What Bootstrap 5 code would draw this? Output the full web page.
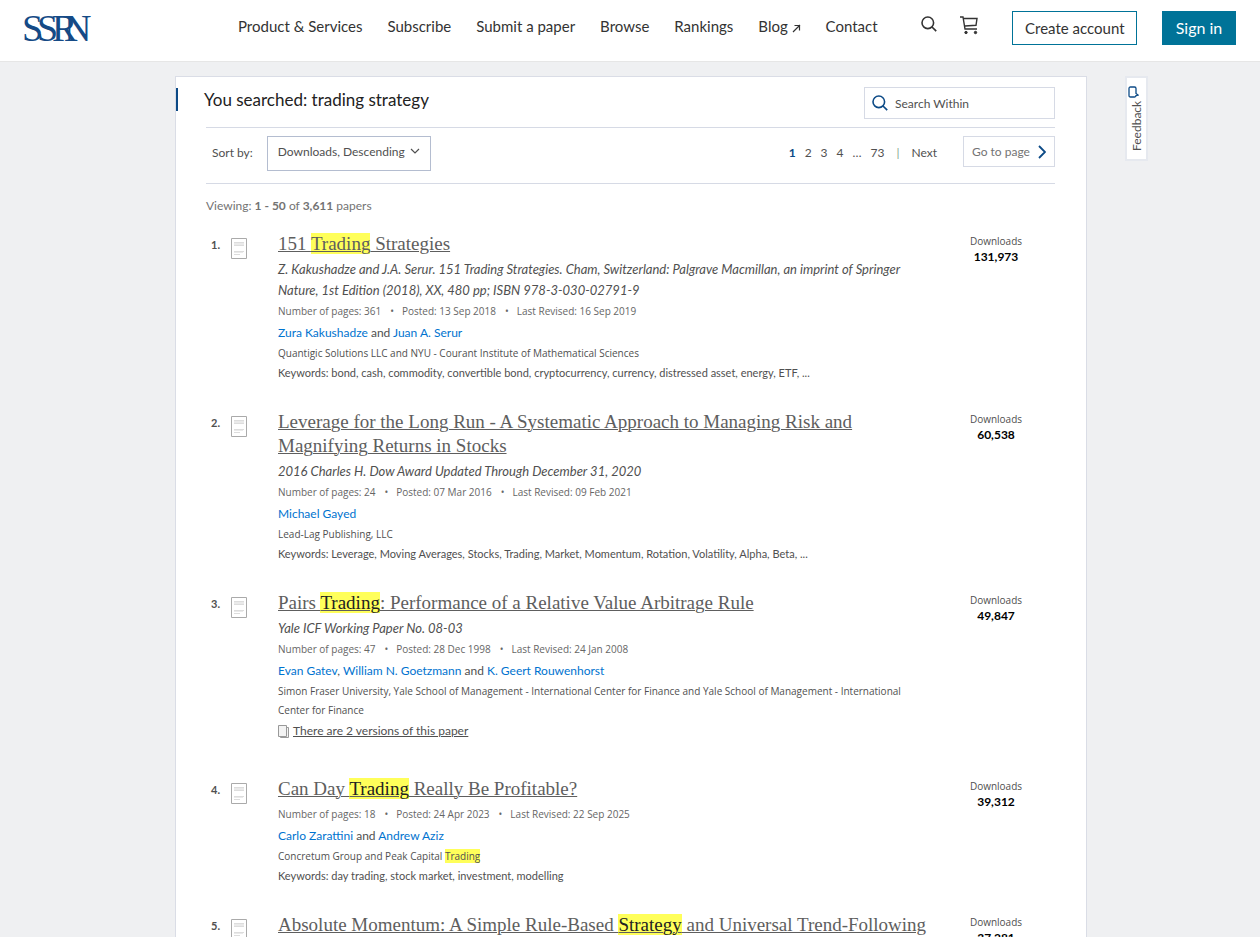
<!DOCTYPE html>
<html lang="en">
<head>
<meta charset="utf-8">
<meta name="viewport" content="width=device-width, initial-scale=1">
<title>SSRN: trading strategy</title>
<link rel="stylesheet" href="https://cdn.jsdelivr.net/npm/bootstrap@5.3.0/dist/css/bootstrap.min.css">
<style>
body{background:#eff0f2;font-family:Lato,"Liberation Sans",sans-serif;font-size:12px;line-height:21px;color:#505050}
a{color:#0073cf;text-decoration:none}
.site-header{background:#fff;border-bottom:1px solid #e6e6e6;height:62px;color:#333}
.brand{margin-left:22px}
.site-header .nav-link{color:#333;padding:0;font-size:15px;line-height:24px;white-space:nowrap}
.main-nav{gap:25px;margin-left:144px;padding-top:14px}
.header-actions{padding:11px 24px 0 0}
.header-actions .icon-button{padding:0;border:0;background:none;color:#333;display:flex;margin-top:4px}
.header-actions .btn{height:34px;line-height:24px;padding:4px 12px;border-radius:0;white-space:nowrap}
.cart-button{margin:0 34px 0 23px}
.header-actions .btn-create{border:1px solid #007398;color:#333;background:#fff;width:125px;font-size:15px;margin-right:25px}
.header-actions .btn-signin{border:1px solid #007398;background:#007398;color:#fff;width:74px;font-size:16px}
.page-main{padding:14px 0 0 2px}
.side{flex:1 1 0}
.results-panel{flex:0 1 912px;background:#fff;border:1px solid #dadde6}
.panel-heading{border-left:2px solid #0c4a86;height:23px;margin-top:11px;padding-left:26px;font-size:17px;line-height:23px;color:#222}
.search-within{width:191px;height:32px;margin:10px 31px 0 0;border:1px solid #d6dae5;padding:0 7px;gap:7px}
.search-within input{border:0;outline:0;font-size:12px;width:150px;padding:0;color:#505050}
.search-within input::placeholder{color:#505050;opacity:1}
.panel-body{padding:0 31px 0 30px}
.toolbar-row{border-top:1px solid #d6dae5;border-bottom:1px solid #d6dae5;margin-top:8px;padding:8px 0 12px 6px;height:57px}
.toolbar-row label,.page-list{padding-top:6px}
.sort-select{appearance:none;width:164px;height:35px;border:1px solid #b4bdd0;border-radius:0;padding:0 20px 4px 10px;margin-left:14px;color:#505050;font-size:12px;
background:#fff url("data:image/svg+xml,%3Csvg xmlns='http://www.w3.org/2000/svg' width='10' height='6'%3E%3Cpath d='M1 1l4 4 4-4' fill='none' stroke='%23505050' stroke-width='1.2'/%3E%3C/svg%3E") no-repeat right 10px top 11px}
.page-list{gap:9px}
.page-list a{color:#505050}
.page-list .current{color:#0c4a86;font-weight:700}
.page-list .divider{color:#7fa38b;margin:0 3px}
.goto-page{width:92px;height:31px;border:1px solid #d6dae5;background:#fff;color:#737373;padding:0 8px;margin-left:26px}
.viewing{color:#737373;padding:11px 0 16px}
.paper{display:grid;grid-template-columns:20px 52px minmax(0,1fr) 118px;margin-bottom:28px}
.paper-no{font-size:11px;font-weight:700;padding:2px 0 0 5px}
.paper-icon{padding:6px 0 0 5px}
.paper-info{padding-right:8px}
.paper-title{font:400 19px/24px "Liberation Serif",serif;margin:0 0 3px}
.paper-title a{color:#5e5e5e;text-decoration:underline;text-decoration-thickness:1px}
.paper mark{background:#ffff5a;color:inherit;padding:0}
.paper-title .strong-hit mark{color:#222}
.paper-ref{font-size:13px;font-style:italic}
.paper-meta,.paper-affil,.dl{font-family:"Open Sans",sans-serif;font-size:10px}
.paper-meta{color:#666}
.paper-meta span+span::before{content:"•";margin:0 8px 0 9px}
.paper-authors{margin-bottom:1px}
.paper-affil{line-height:19px}
.paper-words{font-size:11px;line-height:19px}
.versions{margin-bottom:36px;gap:4px}
.versions a{color:#505050;text-decoration:underline}
.versions svg{margin-top:2px}
.dl{text-align:center;line-height:15px;padding-top:2px}
.dl strong{display:block;font-family:Lato,sans-serif;font-size:12px;color:#000}
.feedback-tab{writing-mode:vertical-rl;transform:rotate(180deg);background:#fff;border:2px solid #e6e9ef;width:23px;height:85px;margin:0 0 0 38px;padding:0;color:#505050;line-height:19px}
</style>
</head>
<body>
<svg class="d-none" aria-hidden="true">
<symbol id="doc" viewBox="0 0 16 21"><path fill="#fff" stroke="#aaa" d="M.5.5h15v20H.5z"/><path stroke="#ddd" d="M3 4.500h10M3 7.500h10M3 13.500h10M3 16.500h6"/><path stroke="#eaeaea" d="M3 5.500h10M3 6.500h10M3 14.500h9"/></symbol>
<symbol id="lens" viewBox="0 0 16 16"><circle cx="6.800" cy="6.800" r="5.800" fill="none" stroke="currentColor" stroke-width="1.600"/><path d="M11 11l4.200 4.200" stroke="currentColor" stroke-width="1.700"/></symbol>
</svg>
<header class="site-header d-flex align-items-start">
<a href="#" class="brand" aria-label="SSRN home"><svg class="d-block" width="72" height="60" viewBox="0 0 72 60"><text x="0 15 30 42" y="41" font-family="Liberation Serif,serif" font-size="38" fill="#154a86">SSRN</text></svg></a>
<nav class="nav main-nav flex-nowrap">
<a class="nav-link" href="#">Product &amp; Services</a><a class="nav-link" href="#">Subscribe</a><a class="nav-link" href="#">Submit a paper</a><a class="nav-link" href="#">Browse</a><a class="nav-link" href="#">Rankings</a><a class="nav-link" href="#">Blog <svg width="9" height="9" viewBox="0 0 9 9" fill="none" stroke="currentColor" stroke-width="1.200"><path d="M1 8l7-7M2.500 1.500h5v5"/></svg></a><a class="nav-link" href="#">Contact</a>
</nav>
<div class="header-actions d-flex align-items-start ms-auto">
<button class="icon-button" aria-label="Search"><svg width="16" height="18"><use href="#lens" width="16" height="16" y="1"/></svg></button>
<button class="icon-button cart-button" aria-label="Cart"><svg width="18" height="20" viewBox="0 0 18 20" fill="none" stroke="#333" stroke-width="1.400"><path d="M0 2h3l2 12h12M3.500 3.500H17l-1 6.800L4.800 11"/><circle cx="6" cy="17.500" r="1.200" fill="#333" stroke-width="1"/><circle cx="15.500" cy="17.500" r="1.200" fill="#333" stroke-width="1"/></svg></button>
<button class="btn btn-create">Create account</button>
<button class="btn btn-signin">Sign in</button>
</div>
</header>
<main class="page-main d-flex">
<div class="side"></div>
<section class="results-panel">
<div class="d-flex justify-content-between align-items-start">
<h1 class="panel-heading mb-0 fw-normal">You searched: trading strategy</h1>
<label class="search-within d-flex align-items-center"><svg width="16" height="16" color="#0c4a86"><use href="#lens"/></svg><input type="text" placeholder="Search Within" aria-label="Search Within"></label>
</div>
<div class="panel-body">
<div class="toolbar-row d-flex align-items-start">
<label for="sort">Sort by:</label>
<select id="sort" class="sort-select"><option>Downloads, Descending</option></select>
<nav class="page-list d-flex ms-auto" aria-label="Pages"><a class="current" href="#">1</a><a href="#">2</a><a href="#">3</a><a href="#">4</a><span>…</span><a href="#">73</a><span class="divider">|</span><a href="#">Next</a></nav>
<button class="goto-page d-flex align-items-center justify-content-between">Go to page<svg width="8" height="14" viewBox="0 0 8 14" fill="none" stroke="#0c4a86" stroke-width="1.800"><path d="M1 1l6 6-6 6"/></svg></button>
</div>
<div class="viewing">Viewing: <b>1 - 50</b> of <b>3,611</b> papers</div>

<article class="paper"><div class="paper-no">1.</div><div class="paper-icon"><svg class="d-block" width="16" height="21"><use href="#doc"/></svg></div>
<div class="paper-info"><h2 class="paper-title"><a href="#">151 <mark>Trading</mark> Strategies</a></h2>
<div class="paper-ref">Z. Kakushadze and J.A. Serur. 151 Trading Strategies. Cham, Switzerland: Palgrave Macmillan, an imprint of Springer Nature, 1st Edition (2018), XX, 480 pp; ISBN 978-3-030-02791-9</div>
<div class="paper-meta"><span>Number of pages: 361</span><span>Posted: 13 Sep 2018</span><span>Last Revised: 16 Sep 2019</span></div>
<div class="paper-authors"><a href="#">Zura Kakushadze</a> and <a href="#">Juan A. Serur</a></div>
<div class="paper-affil">Quantigic Solutions LLC and NYU - Courant Institute of Mathematical Sciences</div>
<div class="paper-words">Keywords: bond, cash, commodity, convertible bond, cryptocurrency, currency, distressed asset, energy, ETF, ...</div></div>
<div class="dl">Downloads<strong>131,973</strong></div></article>

<article class="paper"><div class="paper-no">2.</div><div class="paper-icon"><svg class="d-block" width="16" height="21"><use href="#doc"/></svg></div>
<div class="paper-info"><h2 class="paper-title"><a href="#">Leverage for the Long Run - A Systematic Approach to Managing Risk and Magnifying Returns in Stocks</a></h2>
<div class="paper-ref">2016 Charles H. Dow Award Updated Through December 31, 2020</div>
<div class="paper-meta"><span>Number of pages: 24</span><span>Posted: 07 Mar 2016</span><span>Last Revised: 09 Feb 2021</span></div>
<div class="paper-authors"><a href="#">Michael Gayed</a></div>
<div class="paper-affil">Lead-Lag Publishing, LLC</div>
<div class="paper-words">Keywords: Leverage, Moving Averages, Stocks, Trading, Market, Momentum, Rotation, Volatility, Alpha, Beta, ...</div></div>
<div class="dl">Downloads<strong>60,538</strong></div></article>

<article class="paper"><div class="paper-no">3.</div><div class="paper-icon"><svg class="d-block" width="16" height="21"><use href="#doc"/></svg></div>
<div class="paper-info"><h2 class="paper-title"><a class="strong-hit" href="#">Pairs <mark>Trading</mark>: Performance of a Relative Value Arbitrage Rule</a></h2>
<div class="paper-ref">Yale ICF Working Paper No. 08-03</div>
<div class="paper-meta"><span>Number of pages: 47</span><span>Posted: 28 Dec 1998</span><span>Last Revised: 24 Jan 2008</span></div>
<div class="paper-authors"><a href="#">Evan Gatev</a>, <a href="#">William N. Goetzmann</a> and <a href="#">K. Geert Rouwenhorst</a></div>
<div class="paper-affil">Simon Fraser University, Yale School of Management - International Center for Finance and Yale School of Management - International Center for Finance</div>
<div class="versions d-flex align-items-center mb-2"><svg width="11" height="13" viewBox="0 0 11 13" fill="#f3f3f3" stroke="#999"><path d="M2.500 2.500h8v10h-8z"/><path d="M.5.5h8v11h-8z"/></svg><a href="#">There are 2 versions of this paper</a></div></div>
<div class="dl">Downloads<strong>49,847</strong></div></article>

<article class="paper"><div class="paper-no">4.</div><div class="paper-icon"><svg class="d-block" width="16" height="21"><use href="#doc"/></svg></div>
<div class="paper-info"><h2 class="paper-title"><a class="strong-hit" href="#">Can Day <mark>Trading</mark> Really Be Profitable?</a></h2>
<div class="paper-meta"><span>Number of pages: 18</span><span>Posted: 24 Apr 2023</span><span>Last Revised: 22 Sep 2025</span></div>
<div class="paper-authors"><a href="#">Carlo Zarattini</a> and <a href="#">Andrew Aziz</a></div>
<div class="paper-affil">Concretum Group and Peak Capital <mark>Trading</mark></div>
<div class="paper-words">Keywords: day trading, stock market, investment, modelling</div></div>
<div class="dl">Downloads<strong>39,312</strong></div></article>

<article class="paper"><div class="paper-no">5.</div><div class="paper-icon"><svg class="d-block" width="16" height="21"><use href="#doc"/></svg></div>
<div class="paper-info"><h2 class="paper-title"><a class="strong-hit" href="#">Absolute Momentum: A Simple Rule-Based <mark>Strategy</mark> and Universal Trend-Following</a></h2></div>
<div class="dl">Downloads<strong>37,281</strong></div></article>
</div>
</section>
<aside class="side"><button class="feedback-tab">Feedback <svg class="align-middle" width="11" height="12" viewBox="0 0 11 12" fill="none" stroke="#0c4a86" stroke-width="1.300"><path transform="rotate(180 5.500 6)" d="M2.500 1h4q1.500 0 1.500 1.500v5l2 1.500-2 .5q0 1.500-1.500 1.500h-4Q1 11 1 9.500v-7Q1 1 2.500 1z"/></svg></button></aside>
</main>
<script src="https://cdn.jsdelivr.net/npm/bootstrap@5.3.0/dist/js/bootstrap.bundle.min.js"></script>
</body>
</html>
